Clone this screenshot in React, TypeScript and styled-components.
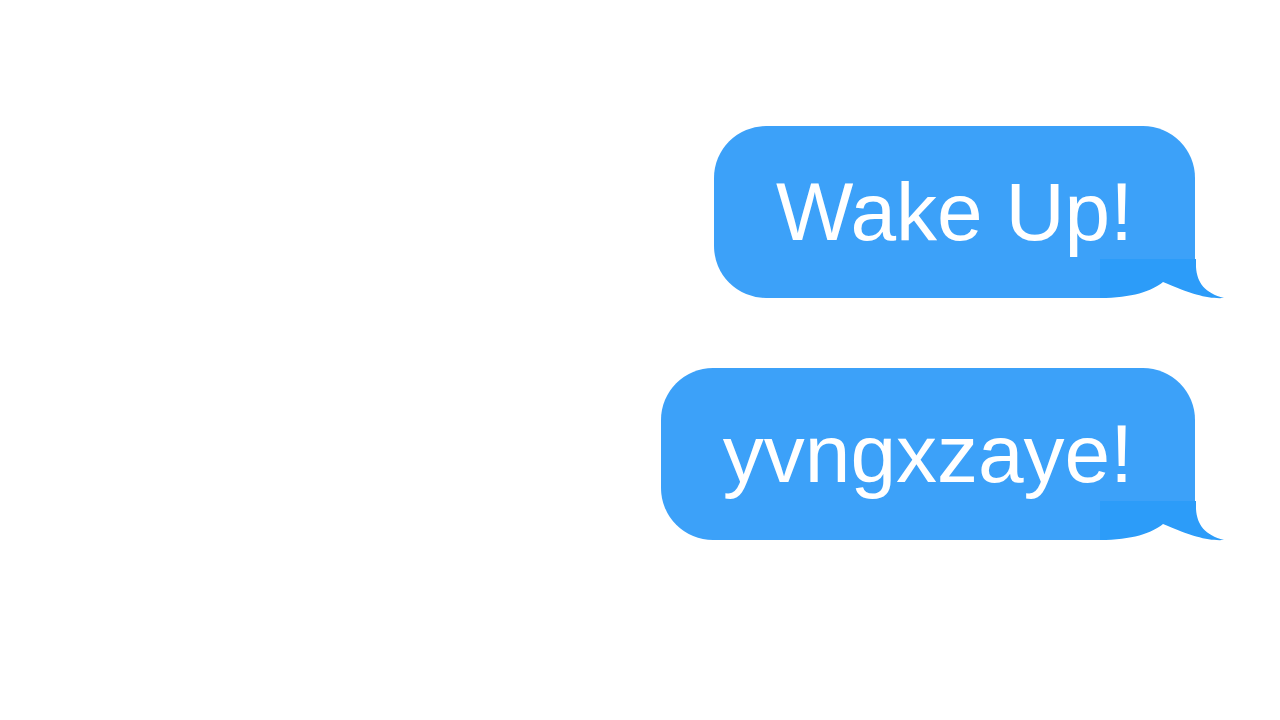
import React from "react";
import styled, { createGlobalStyle } from "styled-components";

const Global = createGlobalStyle`
  html, body { margin: 0; padding: 0; background: #ffffff; }
  body { font-family: "Liberation Sans", Arial, sans-serif; }
`;

const Thread = styled.div`
  display: flex;
  flex-direction: column;
  align-items: flex-end;
  gap: 70px;
  padding: 126px 85px 0 0;
  width: 1280px;
  height: 720px;
  box-sizing: border-box;
`;

const Bubble = styled.div`
  position: relative;
  background: #3ca1f9;
  color: #ffffff;
  font-family: "Liberation Sans", Arial, sans-serif;
  font-size: 82px;
  line-height: 92px;
  padding: 40px 62px;
  border-radius: 52px 52px 0 52px;
  white-space: nowrap;
`;

const Label = styled.span`
  position: relative;
  z-index: 1;
`;

const Tail = styled.svg`
  position: absolute;
  right: -32px;
  bottom: -3px;
  width: 130px;
  height: 42px;
  overflow: visible;
`;

const BubbleTail = () => (
  <Tail viewBox="0 0 130 42" aria-hidden="true">
    <rect x="3" y="0" width="99" height="42" fill="#ffffff" />
    <path
      d="M3 0 L99 0 L99 8 C100 24 108 34 127 39 C112 40 96 36 66 23 C55 32 35 39 3 39 Z"
      fill="#2c9cf9"
    />
  </Tail>
);

const messages = ["Wake Up!", "yvngxzaye!"];

export default function App() {
  return (
    <>
      <Global />
      <Thread>
        {messages.map((m) => (
          <Bubble key={m}>
            <BubbleTail />
            <Label>{m}</Label>
          </Bubble>
        ))}
      </Thread>
    </>
  );
}
